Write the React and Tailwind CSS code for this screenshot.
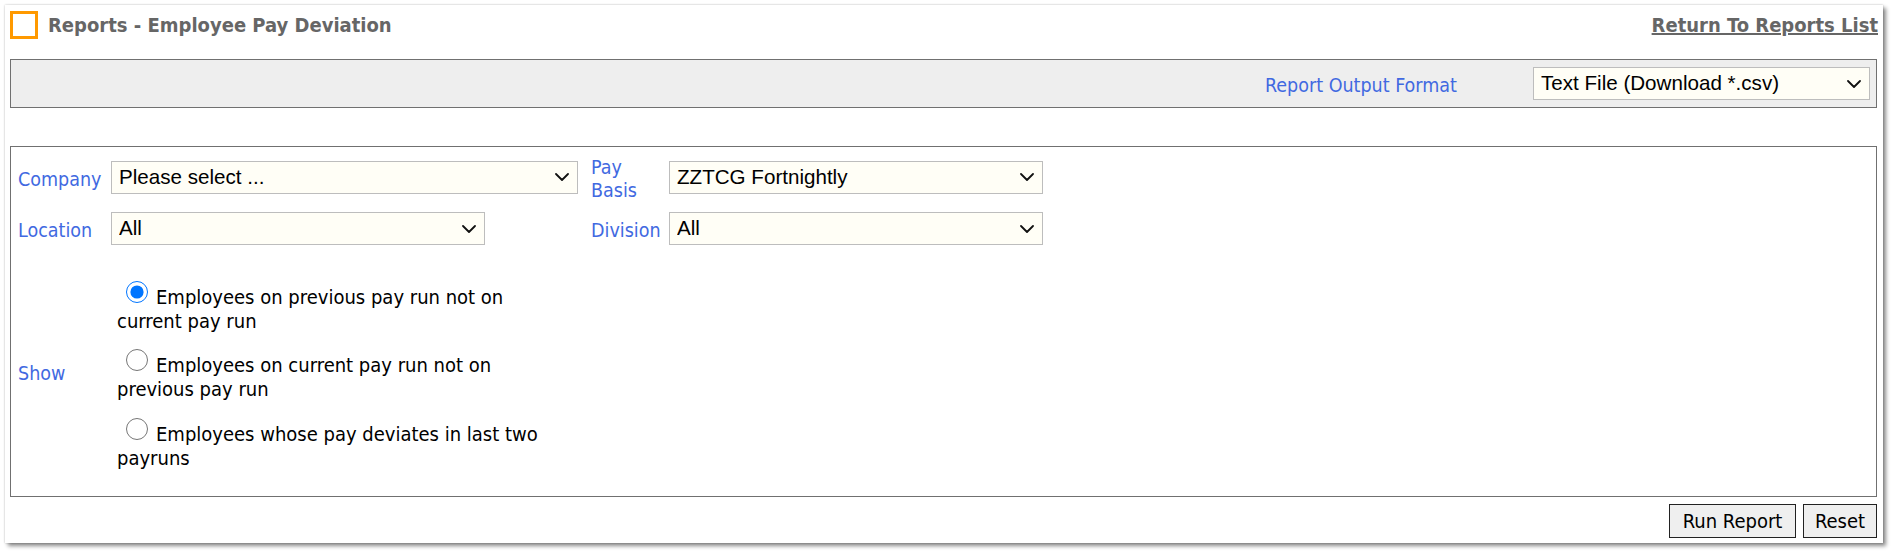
import React from "react";

function Chevron() {
  return (
    <svg
      width="14"
      height="8"
      viewBox="0 0 14 8"
      fill="none"
      stroke="#111"
      strokeWidth="1.8"
      strokeLinecap="round"
      strokeLinejoin="round"
      className="pointer-events-none absolute right-[9px] top-1/2 -translate-y-1/2"
    >
      <path d="M1 1l6 6 6-6" />
    </svg>
  );
}

function Select({ value, options, className }) {
  return (
    <div className={`relative h-[33px] ${className}`}>
      <select
        defaultValue={value}
        className="h-full w-full appearance-none border border-[#bdbdbd] bg-[#fffef6] pl-[7px] font-['Liberation_Sans',Arial,sans-serif] text-[20.6px] text-black outline-none"
      >
        {options.map((o) => (
          <option key={o}>{o}</option>
        ))}
      </select>
      <Chevron />
    </div>
  );
}

function Label({ children, className = "" }) {
  return (
    <div className={`text-[19.5px] leading-[23px] text-[#4169e1] ${className}`}>
      {children}
    </div>
  );
}

function Radio({ checked, children, className = "" }) {
  return (
    <label className={`block text-[20px] leading-[24px] text-black ${className}`}>
      <input
        type="radio"
        name="show"
        defaultChecked={checked}
        className="mb-0 ml-[9px] mr-[8px] mt-0 h-[22px] w-[22px] align-[1px]"
      />
      {children}
    </label>
  );
}

export default function App() {
  return (
    <div className="h-[552px] w-[1893px] bg-white pl-[5px] pt-[5px] font-['DejaVu_Sans_Condensed','DejaVu_Sans',sans-serif]">
      <div className="h-[538px] w-[1878px] bg-white pl-[5px] pr-[6px] pt-[6px] shadow-[0_0_2px_rgba(0,0,0,0.25),3px_3px_4px_rgba(0,0,0,0.45)]">
        {/* header */}
        <div className="flex h-[28px] items-center">
          <div className="h-[28px] w-[28px] border-[3px] border-[#ff9900]" />
          <div className="ml-[10px] text-[20px] font-bold text-[#666666]">
            Reports - Employee Pay Deviation
          </div>
          <a
            href="#"
            className="ml-auto mr-[-1px] text-[20px] font-bold text-[#666666] underline"
          >
            Return To Reports List
          </a>
        </div>

        {/* output format bar */}
        <div className="mt-[20px] flex h-[49px] items-center justify-end border border-[#707070] bg-[#eeeeee] pr-[6px]">
          <Label className="w-[268px] pt-[4px]">Report Output Format</Label>
          <Select
            className="w-[337px]"
            value="Text File (Download *.csv)"
            options={["Text File (Download *.csv)", "PDF", "Excel"]}
          />
        </div>

        {/* form panel */}
        <div className="mt-[38px] h-[351px] border border-[#707070] pl-[7px] pt-[5px]">
          <div className="flex h-[50px] items-center">
            <Label className="w-[93px] pt-[4px]">Company</Label>
            <div className="w-[480px]">
              <Select
                className="w-[467px]"
                value="Please select ..."
                options={["Please select ..."]}
              />
            </div>
            <Label className="w-[78px] pt-[3px]">Pay Basis</Label>
            <Select
              className="w-[374px]"
              value="ZZTCG Fortnightly"
              options={["ZZTCG Fortnightly"]}
            />
          </div>

          <div className="flex h-[53px] items-center">
            <Label className="w-[93px] pt-[3px]">Location</Label>
            <div className="w-[480px]">
              <Select className="w-[374px]" value="All" options={["All"]} />
            </div>
            <Label className="w-[78px] pt-[3px]">Division</Label>
            <Select className="w-[374px]" value="All" options={["All"]} />
          </div>

          <div className="flex">
            <Label className="w-[93px] self-center pb-[4px] pt-[26px]">Show</Label>
            <div className="w-[449px] pl-[6px] pt-[26px]">
              <Radio checked>Employees on previous pay run not on current pay run</Radio>
              <Radio className="mt-[16px]">
                Employees on current pay run not on previous pay run
              </Radio>
              <Radio className="mt-[17px]">
                Employees whose pay deviates in last two payruns
              </Radio>
            </div>
          </div>
        </div>

        {/* buttons */}
        <div className="mt-[7px] flex justify-end gap-[7px]">
          <button className="h-[34px] w-[127px] border border-[#222222] bg-[#efefef] text-[20px] text-black">
            Run Report
          </button>
          <button className="h-[34px] w-[74px] border border-[#222222] bg-[#efefef] text-[20px] text-black">
            Reset
          </button>
        </div>
      </div>
    </div>
  );
}
